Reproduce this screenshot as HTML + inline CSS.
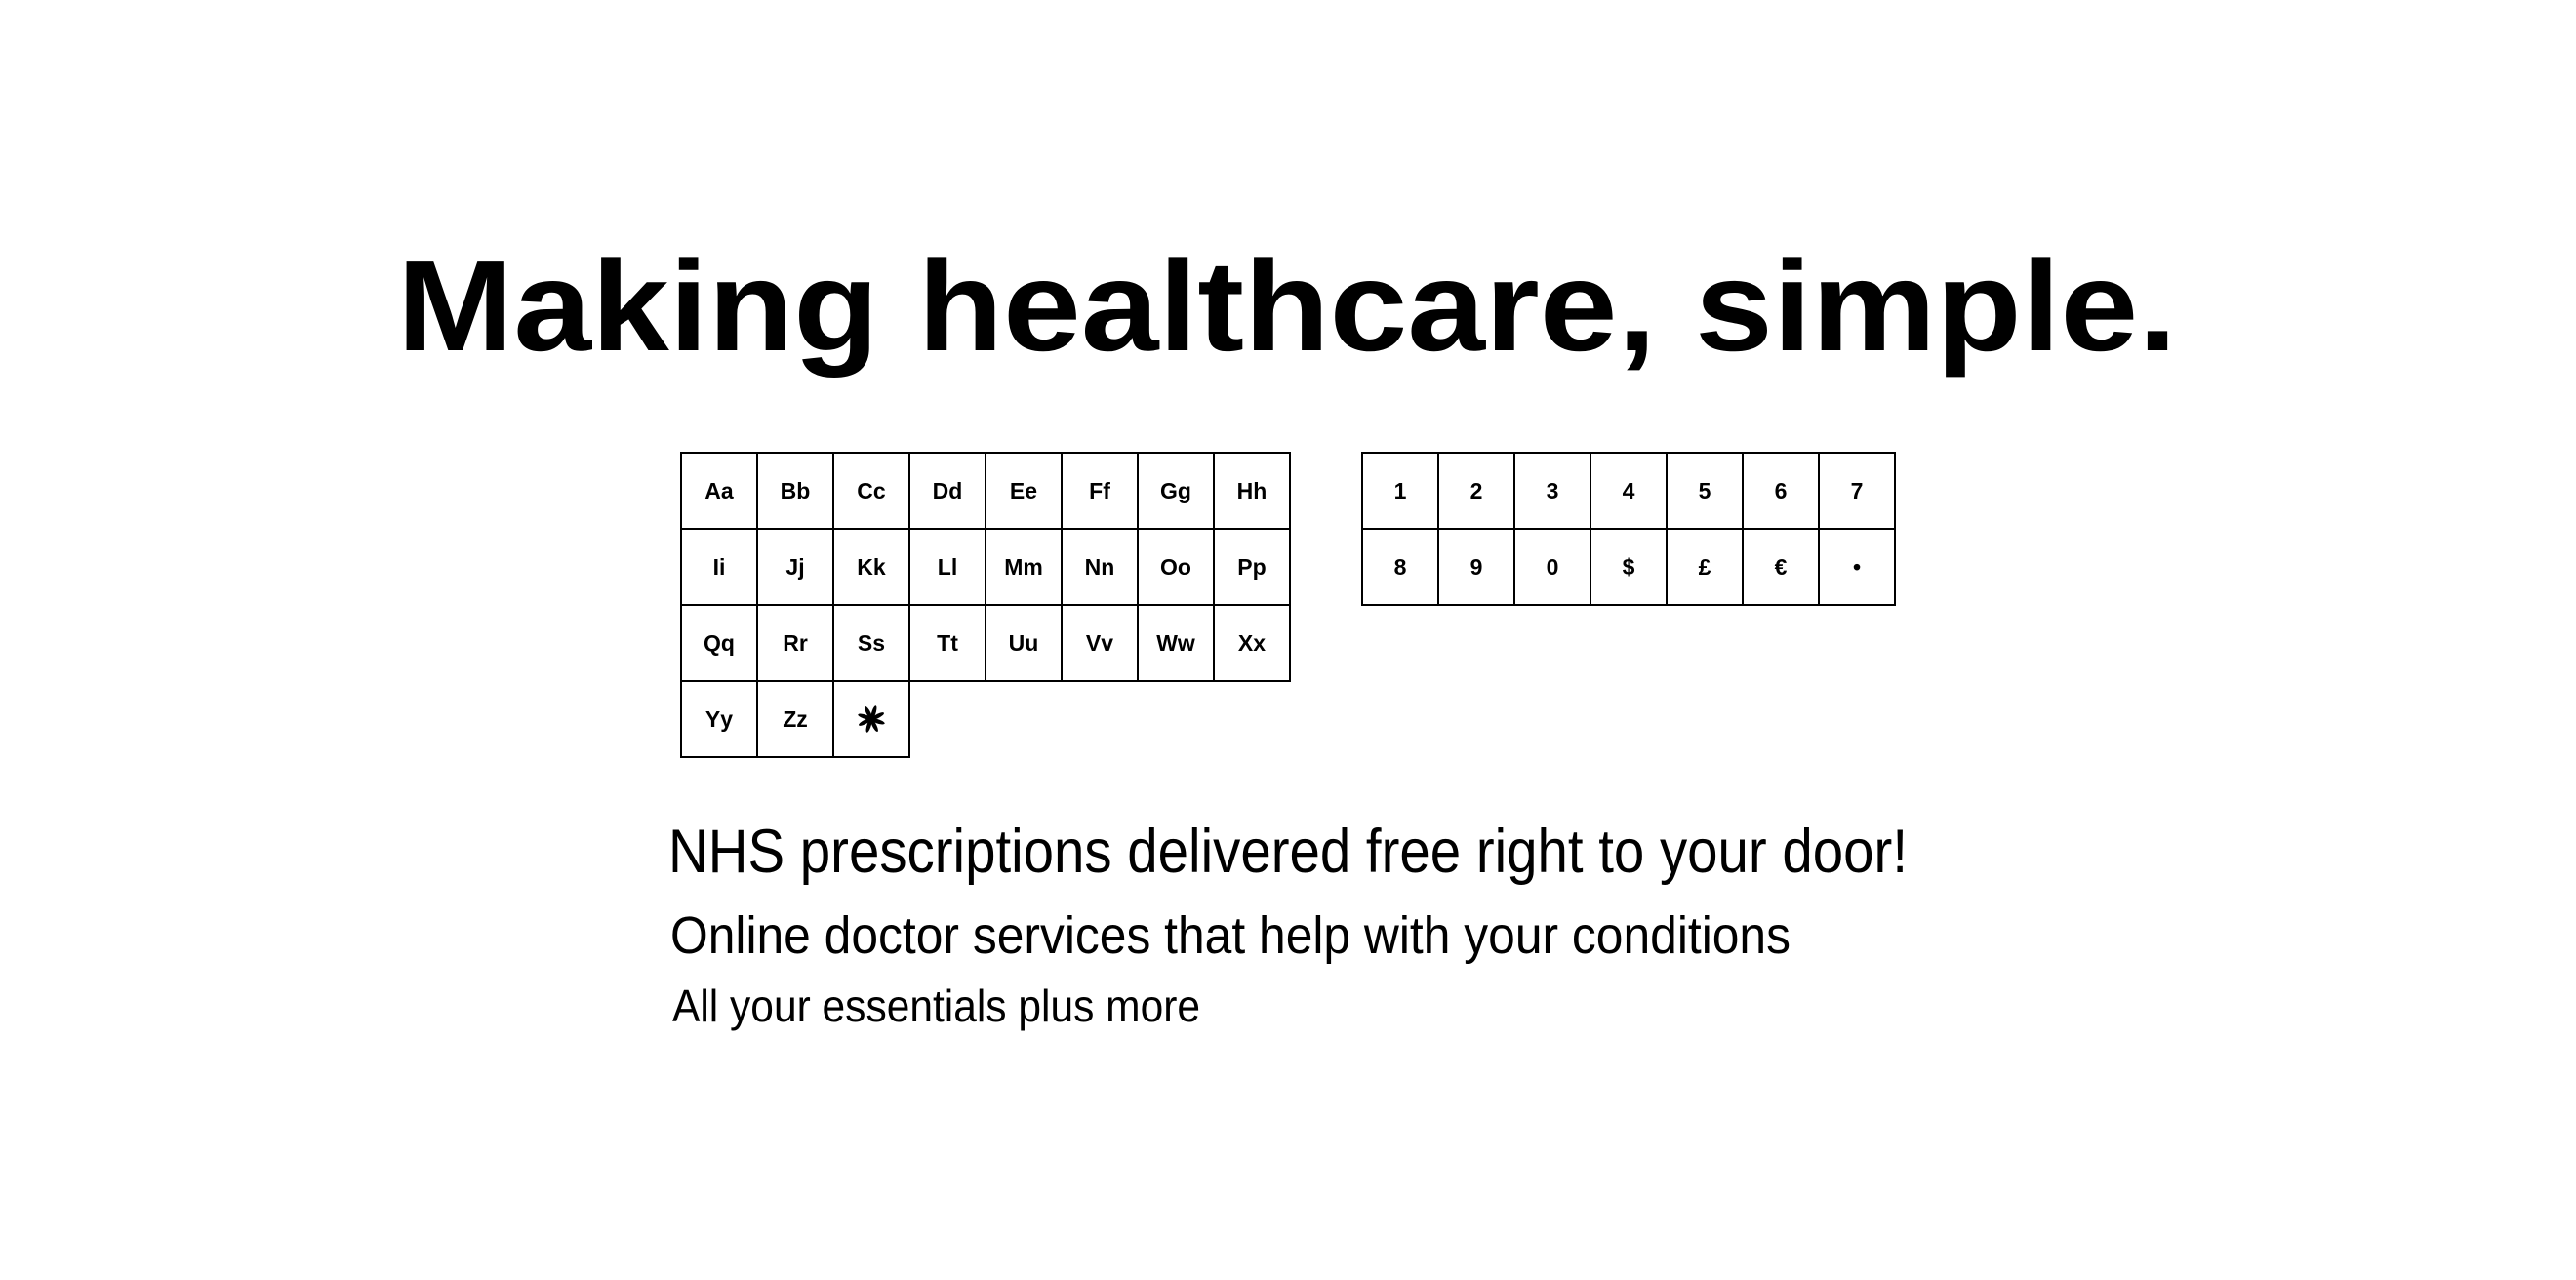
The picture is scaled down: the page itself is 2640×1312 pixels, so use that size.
<!DOCTYPE html>
<html><head><meta charset="utf-8"><style>
html,body{margin:0;padding:0;background:#fff;}
svg{display:block;}
text{font-family:"Liberation Sans",sans-serif;fill:#000;}
.c{font-size:23px;font-weight:bold;text-anchor:middle;}
</style></head><body>
<svg width="2640" height="1312" viewBox="0 0 2640 1312" xmlns="http://www.w3.org/2000/svg">
<rect width="2640" height="1312" fill="#fff"/>
<text x="407" y="359" font-size="132" font-weight="bold" textLength="1824" lengthAdjust="spacingAndGlyphs">Making healthcare, simple.</text>
<g fill="none" stroke="#000" stroke-width="2">
<rect x="698" y="464" width="624" height="234"/>
<rect x="698" y="698" width="234" height="78"/>
<line x1="698" y1="542" x2="1322" y2="542"/>
<line x1="698" y1="620" x2="1322" y2="620"/>
<line x1="776" y1="464" x2="776" y2="776"/>
<line x1="854" y1="464" x2="854" y2="776"/>
<line x1="932" y1="464" x2="932" y2="698"/>
<line x1="1010" y1="464" x2="1010" y2="698"/>
<line x1="1088" y1="464" x2="1088" y2="698"/>
<line x1="1166" y1="464" x2="1166" y2="698"/>
<line x1="1244" y1="464" x2="1244" y2="698"/>
<rect x="1396" y="464" width="546" height="156"/>
<line x1="1396" y1="542" x2="1942" y2="542"/>
<line x1="1474" y1="464" x2="1474" y2="620"/>
<line x1="1552" y1="464" x2="1552" y2="620"/>
<line x1="1630" y1="464" x2="1630" y2="620"/>
<line x1="1708" y1="464" x2="1708" y2="620"/>
<line x1="1786" y1="464" x2="1786" y2="620"/>
<line x1="1864" y1="464" x2="1864" y2="620"/>
</g>
<g>
<text class="c" x="737" y="511">Aa</text><text class="c" x="815" y="511">Bb</text><text class="c" x="893" y="511">Cc</text><text class="c" x="971" y="511">Dd</text><text class="c" x="1049" y="511">Ee</text><text class="c" x="1127" y="511">Ff</text><text class="c" x="1205" y="511">Gg</text><text class="c" x="1283" y="511">Hh</text>
<text class="c" x="737" y="589">Ii</text><text class="c" x="815" y="589">Jj</text><text class="c" x="893" y="589">Kk</text><text class="c" x="971" y="589">Ll</text><text class="c" x="1049" y="589">Mm</text><text class="c" x="1127" y="589">Nn</text><text class="c" x="1205" y="589">Oo</text><text class="c" x="1283" y="589">Pp</text>
<text class="c" x="737" y="667">Qq</text><text class="c" x="815" y="667">Rr</text><text class="c" x="893" y="667">Ss</text><text class="c" x="971" y="667">Tt</text><text class="c" x="1049" y="667">Uu</text><text class="c" x="1127" y="667">Vv</text><text class="c" x="1205" y="667">Ww</text><text class="c" x="1283" y="667">Xx</text>
<text class="c" x="737" y="745">Yy</text><text class="c" x="815" y="745">Zz</text>
<text class="c" x="1435" y="511">1</text><text class="c" x="1513" y="511">2</text><text class="c" x="1591" y="511">3</text><text class="c" x="1669" y="511">4</text><text class="c" x="1747" y="511">5</text><text class="c" x="1825" y="511">6</text><text class="c" x="1903" y="511">7</text>
<text class="c" x="1435" y="589">8</text><text class="c" x="1513" y="589">9</text><text class="c" x="1591" y="589">0</text><text class="c" x="1669" y="589">$</text><text class="c" x="1747" y="589">£</text><text class="c" x="1825" y="589">€</text><text class="c" x="1903" y="589">•</text>
</g>
<g transform="translate(893,737)" fill="#000">
<ellipse cx="0" cy="-6.5" rx="2.4" ry="6.5" transform="rotate(0) skewX(25)"/>
<ellipse cx="0" cy="-6.5" rx="2.4" ry="6.5" transform="rotate(45) skewX(25)"/>
<ellipse cx="0" cy="-6.5" rx="2.4" ry="6.5" transform="rotate(90) skewX(25)"/>
<ellipse cx="0" cy="-6.5" rx="2.4" ry="6.5" transform="rotate(135) skewX(25)"/>
<ellipse cx="0" cy="-6.5" rx="2.4" ry="6.5" transform="rotate(180) skewX(25)"/>
<ellipse cx="0" cy="-6.5" rx="2.4" ry="6.5" transform="rotate(225) skewX(25)"/>
<ellipse cx="0" cy="-6.5" rx="2.4" ry="6.5" transform="rotate(270) skewX(25)"/>
<ellipse cx="0" cy="-6.5" rx="2.4" ry="6.5" transform="rotate(315) skewX(25)"/>
</g>
<text x="685" y="894" font-size="63" textLength="1270" lengthAdjust="spacingAndGlyphs">NHS prescriptions delivered free right to your door!</text>
<text x="687" y="977" font-size="54" textLength="1148" lengthAdjust="spacingAndGlyphs">Online doctor services that help with your conditions</text>
<text x="689" y="1047" font-size="46" textLength="541" lengthAdjust="spacingAndGlyphs">All your essentials plus more</text>
</svg>
</body></html>
